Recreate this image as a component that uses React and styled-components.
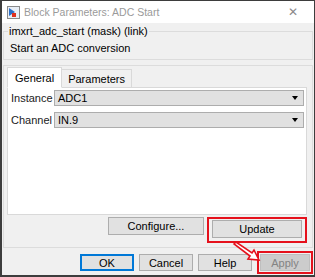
import React from 'react'
import styled, { createGlobalStyle } from 'styled-components'

const Global = createGlobalStyle`
  html, body { margin: 0; padding: 0; background: #fff; }
  body {
    font-family: "Liberation Sans", Arial, sans-serif;
    font-size: 11px;
    color: #000;
  }
`

const Window = styled.div`
  position: relative;
  width: 315px;
  height: 277px;
  box-sizing: border-box;
  border: 1px solid #3d3d3d;
  border-left-width: 2px;
  border-bottom-width: 2px;
  background: #f0f0f0;
  display: flex;
  flex-direction: column;
`

const TitleBar = styled.div`
  height: 22px;
  background: #fff;
  display: flex;
  align-items: center;
  padding-left: 5px;
  flex-shrink: 0;
`

const TitleText = styled.span`
  margin-left: 4px;
  color: #9a9a9a;
  font-size: 10.5px;
`

const Close = styled.span`
  margin-left: auto;
  margin-right: 16px;
  color: #8a8a8a;
  font-family: "DejaVu Sans", sans-serif;
  font-size: 12px;
`

const Body = styled.div`
  padding: 0 1px;
  display: flex;
  flex-direction: column;
`

const DescBox = styled.fieldset`
  margin: 0;
  padding: 0 6px 2px;
  border: 1px solid #dcdcdc;
  legend {
    padding: 0 1px;
    margin-left: -2px;
    line-height: 16px;
  }
`

const DescText = styled.div`
  line-height: 16px;
  padding: 1px 0;
`

const ParamBox = styled.div`
  margin-top: 5px;
  border: 1px solid #dcdcdc;
  padding: 2px 5px 4px 3px;
  display: flex;
  flex-direction: column;
`

const TabBar = styled.div`
  display: flex;
  align-items: flex-end;
  height: 20px;
  margin-bottom: -1px;
  position: relative;
  z-index: 1;
`

const Tab = styled.div`
  box-sizing: border-box;
  height: ${p => (p.$active ? '21px' : '19px')};
  padding: 0 ${p => (p.$active ? '7px' : '6px')};
  display: flex;
  align-items: center;
  border: 1px solid #d9d9d9;
  border-bottom: 1px solid ${p => (p.$active ? '#fff' : '#d9d9d9')};
  border-left: ${p => (p.$active ? '1px solid #d9d9d9' : 'none')};
  background: ${p => (p.$active ? '#fff' : '#f0f0f0')};
`

const Panel = styled.div`
  background: #fff;
  border: 1px solid #d9d9d9;
  height: 128px;
  box-sizing: border-box;
  padding: 2px 2px 0 3px;
  display: flex;
  flex-direction: column;
  gap: 6px;
`

const Row = styled.div`
  display: flex;
  align-items: center;
`

const Label = styled.span`
  width: 43px;
  color: #222;
`

const Select = styled.div`
  flex: 1;
  height: 16px;
  box-sizing: border-box;
  background: #e1e1e1;
  border: 1px solid #adadad;
  display: flex;
  align-items: center;
  padding: 0 5px 0 3px;
  justify-content: space-between;
  &::after {
    content: '';
    border-left: 3px solid transparent;
    border-right: 3px solid transparent;
    border-top: 4px solid #000;
  }
`

const ActionRow = styled.div`
  display: flex;
  justify-content: flex-end;
  align-items: flex-start;
  margin-top: 2px;
  gap: 3px;
`

const Button = styled.div`
  box-sizing: border-box;
  width: ${p => p.$w || 54}px;
  height: ${p => p.$h || 18}px;
  display: flex;
  align-items: center;
  justify-content: center;
  background: ${p => (p.$disabled ? '#cccccc' : '#e1e1e1')};
  border: 1px solid ${p => (p.$focus ? '#0078d7' : p.$disabled ? '#bfbfbf' : '#adadad')};
  box-shadow: ${p => (p.$focus ? 'inset 0 0 0 1px #0078d7' : 'none')};
  color: ${p => (p.$disabled ? '#838383' : '#000')};
`

const Mark = styled.div`
  border: 2px solid #e5111c;
  padding: ${p => p.$pad || '1px 2px'};
  display: flex;
`

const Footer = styled.div`
  margin-top: auto;
  display: flex;
  justify-content: flex-end;
  align-items: center;
  gap: 5px;
  padding: 0 1px 1px 0;
`

function BlockIcon() {
  return (
    <svg width="13" height="13" viewBox="0 0 13 13">
      <rect x="0.5" y="0.5" width="12" height="12" fill="#e8eef6" stroke="#8a8a8a" />
      <path d="M2 2 L8 6 L2 10 Z" fill="#2a6fc9" />
      <rect x="5" y="7" width="4" height="4" fill="#e0301e" />
    </svg>
  )
}

function Arrow() {
  return (
    <svg
      width="32"
      height="24"
      viewBox="0 0 32 24"
      style={{ position: 'absolute', left: 229, top: 240 }}
    >
      <path
        d="M3 3 L5 1 L21 12 L23 9 L28 19 L17 18 L19 15 Z"
        fill="#fff"
        stroke="#e5111c"
        strokeWidth="1.6"
      />
    </svg>
  )
}

export default function App() {
  return (
    <>
      <Global />
      <Window>
        <TitleBar>
          <BlockIcon />
          <TitleText>Block Parameters: ADC Start</TitleText>
          <Close>✕</Close>
        </TitleBar>
        <Body>
          <DescBox>
            <legend>imxrt_adc_start (mask) (link)</legend>
            <DescText>Start an ADC conversion</DescText>
          </DescBox>
          <ParamBox>
            <TabBar>
              <Tab $active>General</Tab>
              <Tab>Parameters</Tab>
            </TabBar>
            <Panel>
              <Row>
                <Label>Instance</Label>
                <Select>ADC1</Select>
              </Row>
              <Row>
                <Label>Channel</Label>
                <Select>IN.9</Select>
              </Row>
            </Panel>
            <ActionRow>
              <Button $w={96}>Configure...</Button>
              <Mark $pad="1px 3px 3px 3px">
                <Button $w={90}>Update</Button>
              </Mark>
            </ActionRow>
          </ParamBox>
        </Body>
        <Footer>
          <Button $focus $h={17}>OK</Button>
          <Button $h={17}>Cancel</Button>
          <Button $h={17}>Help</Button>
          <Mark $pad="1px 1px 1px">
            <Button $w={50} $h={17} $disabled>Apply</Button>
          </Mark>
        </Footer>
        <Arrow />
      </Window>
    </>
  )
}
